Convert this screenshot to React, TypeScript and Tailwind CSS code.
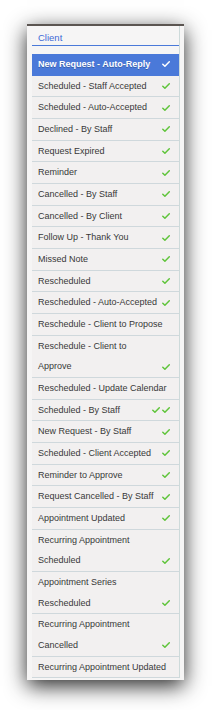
import React from "react";

type Row = {
  lines: string[];
  checks: number;
  active?: boolean;
};

const rows: Row[] = [
  { lines: ["New Request - Auto-Reply"], checks: 1, active: true },
  { lines: ["Scheduled - Staff Accepted"], checks: 1 },
  { lines: ["Scheduled - Auto-Accepted"], checks: 1 },
  { lines: ["Declined - By Staff"], checks: 1 },
  { lines: ["Request Expired"], checks: 1 },
  { lines: ["Reminder"], checks: 1 },
  { lines: ["Cancelled - By Staff"], checks: 1 },
  { lines: ["Cancelled - By Client"], checks: 1 },
  { lines: ["Follow Up - Thank You"], checks: 1 },
  { lines: ["Missed Note"], checks: 1 },
  { lines: ["Rescheduled"], checks: 1 },
  { lines: ["Rescheduled - Auto-Accepted"], checks: 1 },
  { lines: ["Reschedule - Client to Propose"], checks: 0 },
  { lines: ["Reschedule - Client to", "Approve"], checks: 1 },
  { lines: ["Rescheduled - Update Calendar"], checks: 0 },
  { lines: ["Scheduled - By Staff"], checks: 2 },
  { lines: ["New Request - By Staff"], checks: 1 },
  { lines: ["Scheduled - Client Accepted"], checks: 1 },
  { lines: ["Reminder to Approve"], checks: 1 },
  { lines: ["Request Cancelled - By Staff"], checks: 1 },
  { lines: ["Appointment Updated"], checks: 1 },
  { lines: ["Recurring Appointment", "Scheduled"], checks: 1 },
  { lines: ["Appointment Series", "Rescheduled"], checks: 1 },
  { lines: ["Recurring Appointment", "Cancelled"], checks: 1 },
  { lines: ["Recurring Appointment Updated"], checks: 0 },
];

function Check({ white }: { white?: boolean }) {
  return (
    <svg width="8" height="6" viewBox="0 0 8 6" className="block">
      <path
        d="M0.8 3.2 L2.9 5.2 L7.3 0.8"
        fill="none"
        stroke={white ? "#ffffff" : "#5fc43a"}
        strokeWidth="1.5"
        strokeLinecap="round"
        strokeLinejoin="round"
      />
    </svg>
  );
}

function ListRow({ row }: { row: Row }) {
  const base = row.active
    ? "bg-[#4a79d9] border-[#4a79d9] text-white font-bold [text-shadow:0_1px_0_rgba(0,0,0,0.25)]"
    : "bg-[#f2f0f0] border-[#cfd8dc] text-[#383838]";
  return (
    <div className={`flex items-end justify-between border-b pl-[6px] pr-[9px] ${base}`}>
      <div className="whitespace-nowrap leading-[20.67px]">
        {row.lines.map((l) => (
          <div key={l}>{l}</div>
        ))}
      </div>
      <div className="flex h-[20.67px] items-center gap-[2px]">
        {Array.from({ length: row.checks }).map((_, i) => (
          <Check key={i} white={row.active} />
        ))}
      </div>
    </div>
  );
}

export default function App() {
  return (
    <div className="min-h-[710px] bg-white pl-[27px] pt-[24px] font-['Liberation_Sans',Arial,sans-serif] text-[9px]">
      <div className="w-[157px] bg-[#f6f5f5] pb-[2px] shadow-[0_6px_20px_rgba(0,0,0,0.85)]">
        <div className="h-[2px] bg-[#5b5551]" />
        <div className="flex">
          <div className="ml-[5px] w-[147px]">
            <div className="mb-[8px] border-b border-[#4a79d9] pl-[6px] pt-[4px] text-[9.5px] leading-[15px] text-[#4169d6]">
              Client
            </div>
            {rows.map((r) => (
              <ListRow key={r.lines.join(" ")} row={r} />
            ))}
          </div>
          <div className="w-px bg-[#cddada]" />
        </div>
      </div>
    </div>
  );
}
